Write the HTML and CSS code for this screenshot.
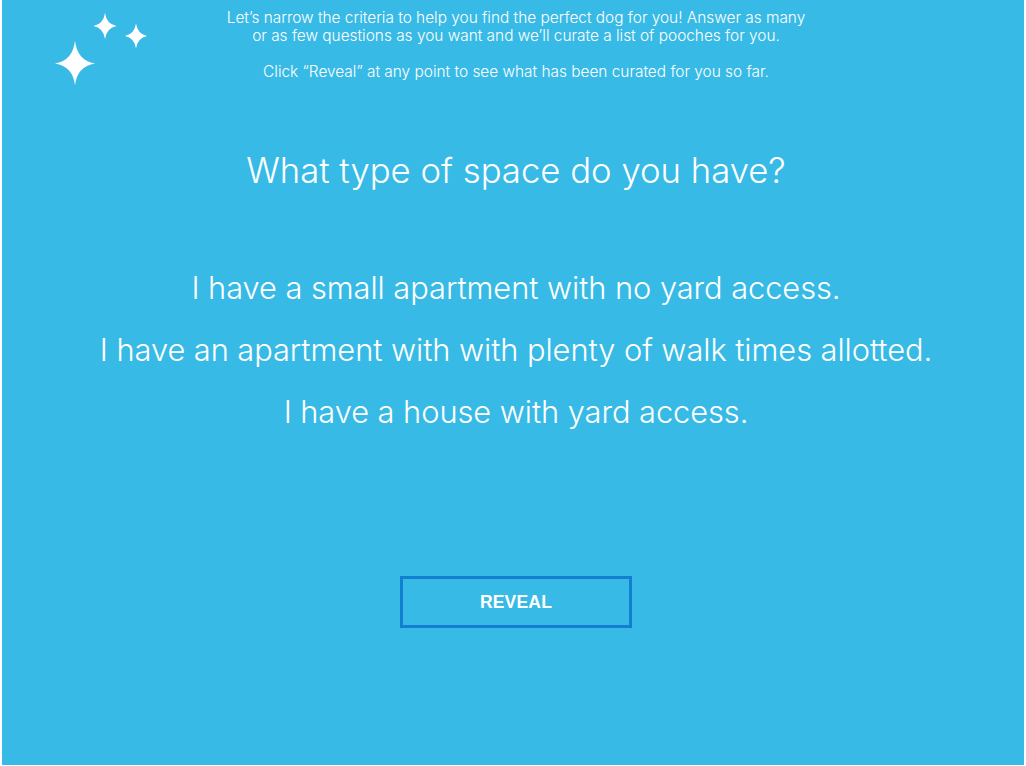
FILE: index.html
```html
<!DOCTYPE html>
<html>
<head>
<meta charset="utf-8">
<link rel="stylesheet" href="styles.css">
</head>
<body>
<div class="stage">
  <svg class="sparkles" width="130" height="100" viewBox="0 0 130 100" aria-hidden="true">
    <path d="M23 0 Q25 20 43 23 Q25 26 23 45 Q21 26 3 23 Q21 20 23 0Z" transform="translate(30 40.5)" fill="#fff"/>
    <path d="M11.5 0 Q13 11 23 13 Q13 15 11.5 26 Q10 15 0 13 Q10 11 11.5 0Z" transform="translate(71.5 13)" fill="#fff"/>
    <path d="M11 0 Q12.5 10.5 22 12.5 Q12.5 14.5 11 25 Q9.5 14.5 0 12.5 Q9.5 10.5 11 0Z" transform="translate(103 23.5)" fill="#fff"/>
  </svg>
  <div class="intro">
    <p>Let’s narrow the criteria to help you find the perfect dog for you! Answer as many<br>or as few questions as you want and we’ll curate a list of pooches for you.</p>
    <p>Click “Reveal” at any point to see what has been curated for you so far.</p>
  </div>
  <h1 class="question">What type of space do you have?</h1>
  <ul class="options">
    <li>I have a small apartment with no yard access.</li>
    <li>I have an apartment with with plenty of walk times allotted.</li>
    <li>I have a house with yard access.</li>
  </ul>
  <button class="reveal">REVEAL</button>
</div>
</body>
</html>
```
FILE: styles.css
```css
html, body {
  margin: 0;
  padding: 0;
  background: #fff;
}
body {
  padding: 0 2px 1px 2px;
  font-family: "Inter", "Liberation Sans", sans-serif;
  color: #fff;
}
.stage {
  position: relative;
  height: 765px;
  padding-left: 6px;
  box-sizing: border-box;
  background: #38bae6;
  display: flex;
  flex-direction: column;
  align-items: center;
}
.sparkles {
  position: absolute;
  left: 20px;
  top: 0;
  overflow: visible;
}
.intro {
  margin-top: 9px;
  text-align: center;
  font-size: 15.4px;
  line-height: 18px;
  font-weight: 300;
}
.intro p {
  margin: 0 0 18px 0;
}
.question {
  margin: 51px 0 0 0;
  font-size: 34.7px;
  font-weight: 300;
  line-height: 40px;
  letter-spacing: 0;
}
.options {
  list-style: none;
  margin: 81px 0 0 0;
  padding: 0;
  text-align: center;
  display: flex;
  flex-direction: column;
  gap: 28px;
}
.options li {
  font-size: 30.8px;
  font-weight: 300;
  line-height: 34px;
  letter-spacing: -0.05px;
}
.reveal {
  margin-top: 147px;
  width: 232px;
  height: 52px;
  background: transparent;
  border: 3px solid #1280d0;
  color: #fff;
  font-family: "Liberation Sans", Arial, sans-serif;
  font-weight: bold;
  font-size: 17.5px;
  letter-spacing: 0.2px;
}
```
